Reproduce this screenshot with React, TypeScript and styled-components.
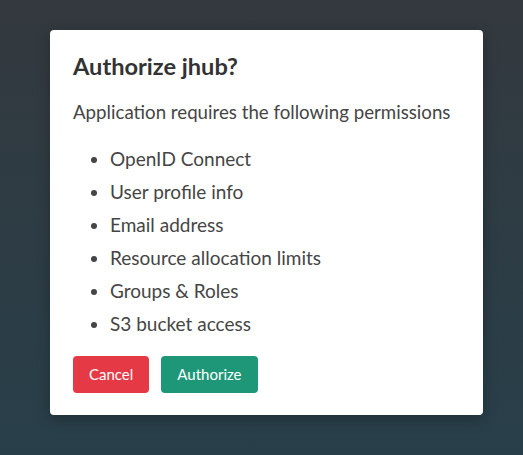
import React from "react";
import styled, { createGlobalStyle } from "styled-components";

const Global = createGlobalStyle`
  html, body { margin: 0; padding: 0; height: 100%; }
  body {
    font-family: Lato, "Open Sans", sans-serif;
    background: linear-gradient(180deg, #33393e 0%, #283f4a 100%);
    min-height: 455px;
  }
  #root { min-height: 455px; }
`;

const Page = styled.div`
  display: flex;
  justify-content: flex-start;
  padding: 30px 0 0 50px;
  min-height: 455px;
  box-sizing: border-box;
`;

const Card = styled.div`
  width: 433px;
  height: 385px;
  box-sizing: border-box;
  background: #fff;
  border-radius: 4px;
  box-shadow: 0 4px 14px rgba(0, 0, 0, 0.25);
  padding: 22px 23px;
  color: #444;
`;

const Title = styled.h1`
  margin: 0;
  font-size: 23.6px;
  font-weight: 700;
  color: #333;
  line-height: 28.8px;
`;

const Lead = styled.p`
  margin: 17px 0 0;
  font-size: 18.7px;
  line-height: 28.5px;
  color: #454545;
`;

const List = styled.ul`
  margin: 16px 0 0;
  padding-left: 37px;
  font-size: 19px;
  line-height: 33px;
  color: #454545;
`;

const Actions = styled.div`
  display: flex;
  gap: 12px;
  margin-top: 15.5px;
`;

const Button = styled.button<{ $variant: "danger" | "success" }>`
  font-family: Lato, sans-serif;
  font-size: 15px;
  height: 37px;
  padding: 0 16px;
  border: none;
  border-radius: 4px;
  color: #fff;
  background: ${(p) => (p.$variant === "danger" ? "#e63946" : "#1e9778")};
  cursor: pointer;
`;

const perms = [
  "OpenID Connect",
  "User profile info",
  "Email address",
  "Resource allocation limits",
  "Groups & Roles",
  "S3 bucket access",
];

export default function App() {
  return (
    <>
      <Global />
      <Page>
        <Card>
          <Title>Authorize jhub?</Title>
          <Lead>Application requires the following permissions</Lead>
          <List>
            {perms.map((p) => (
              <li key={p}>{p}</li>
            ))}
          </List>
          <Actions>
            <Button $variant="danger">Cancel</Button>
            <Button $variant="success">Authorize</Button>
          </Actions>
        </Card>
      </Page>
    </>
  );
}
